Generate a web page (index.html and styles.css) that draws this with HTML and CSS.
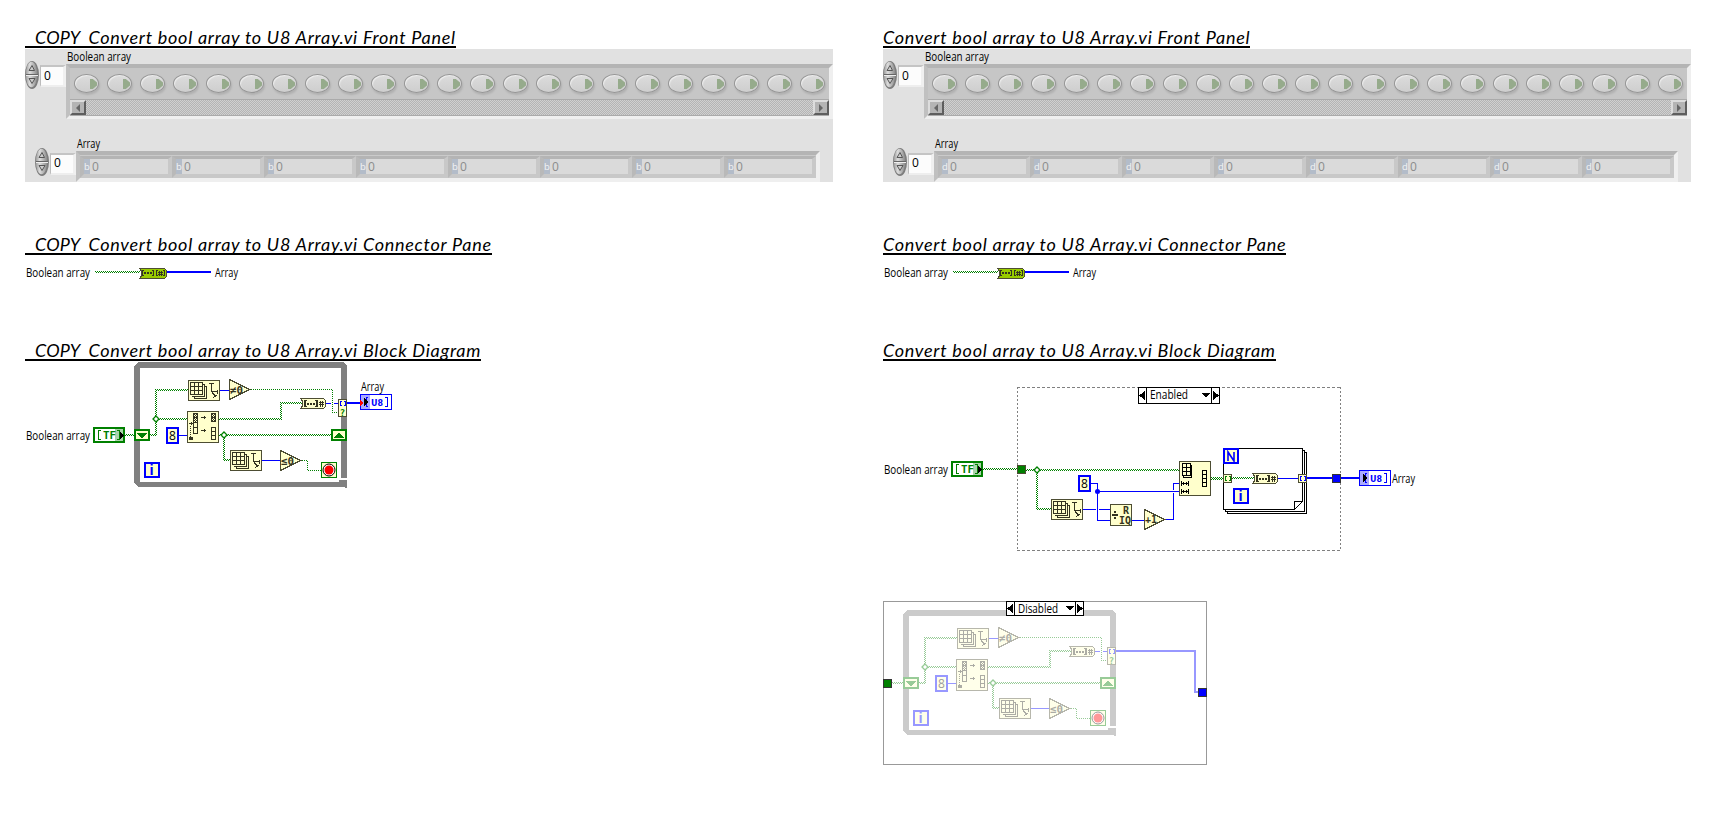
FILE: index.html
```html
<!DOCTYPE html>
<html lang="en">
<head>
<meta charset="utf-8">
<title>Convert bool array to U8 Array.vi</title>
<link rel="stylesheet" href="styles.css">
</head>
<body>
<svg class="defs" width="0" height="0" aria-hidden="true">
  <defs>
    <pattern id="wire" width="2" height="2" patternUnits="userSpaceOnUse"><path fill="#008000" d="M0 0h1v1H0zM1 1h1v1H1z"/></pattern>
    <pattern id="hatch" width="2" height="2" patternUnits="userSpaceOnUse"><path fill="#333320" d="M0 0h1v1H0zM1 1h1v1H1z"/></pattern>
    <linearGradient id="metal"><stop offset="0" stop-color="#999"/><stop offset=".35" stop-color="#ddd"/><stop offset="1" stop-color="#8a8a8a"/></linearGradient>
    <g id="spinner">
      <ellipse cx="7" cy="14" rx="7" ry="14" fill="#7d7d7d"/>
      <ellipse cx="6.500" cy="13.500" rx="5.800" ry="12.800" fill="url(#metal)"/>
      <path d="M1 13.500h12" stroke="#666"/><path d="M1 14.500h12" stroke="#eee"/>
      <path d="M4 9.500L7 4.500L9.500 9.500zM4 17.500h6L7 22.500z" fill="#ccc" stroke="#555"/>
    </g>
    <g id="size">
      <path class="node" d="M.5.5h31v20H.5z"/>
      <path class="ink" d="M6.500 15.500v3h12v-12h-2M4.500 15.500v1h12v-12h-2M2.500 2.500h12v12h-12zM6.500 2.500v12M10.500 2.500v12M2.500 6.500h12M2.500 10.500h12M20.500 3.500h5M23.500 3.500v8h6M29.500 9.500v4M23.500 11.500l4 5M25.500 17.500l4-3"/>
    </g>
    <g id="bool2num">
      <path class="node" d="M.5.5h23l2 2v6l-2 2H.5l1.500-2v-6z"/>
      <path fill="#333320" d="M4 2h3v1H6v5h1v1H4zM15 2h3v7h-3V8h1V3h-1zM7 5h2v2H7zM10 5h2v2h-2zM13 5h2v2h-2z"/>
      <path class="ink" d="M20.500 3v6M22.500 3v6M19 4.500h5M19 6.500h5"/>
    </g>
    <g id="tri"><path class="node" d="M.5.5L20.500 10.500L.5 20.500z"/></g>
    <g id="eight"><path class="const" d="M1 1h11v15H1z" fill="#fff"/><text class="ui" x="3" y="12.500">8</text></g>
    <g id="iter"><path class="const" d="M1 1h14v14H1z"/><text class="iter" x="5.600" y="13">i</text></g>
    <g id="tf">
      <path d="M1 1h30v14H1z" fill="#fff" stroke="#008000" stroke-width="2"/>
      <path d="M22 2h8v12h-8z" fill="#a9d3a9"/>
      <path d="M8 3.500H5.500v9H8M24 3.500h2.500v9H24" fill="none" stroke="#008000"/>
      <text class="px" x="10" y="11.500" fill="#008000" font-size="10" textLength="13" lengthAdjust="spacingAndGlyphs">TF</text>
      <path d="M27 5l4 3.500l-4 3.500z"/>
    </g>
    <g id="u8">
      <path d="M.5.5h31v15H.5z" fill="#fff" stroke="#00f"/>
      <path d="M1 1h9v14H1z" fill="#aaf"/>
      <path d="M8 3.500H6.500v9H8M25 3.500h2.500v9H25" fill="none" stroke="#00f"/>
      <text class="bold" x="11" y="11.500" fill="#00f" font-size="9.500" textLength="12" lengthAdjust="spacingAndGlyphs">U8</text>
      <path d="M4 4l4 4l-4 4z"/>
    </g>
    <g id="join"><path d="M3 0L6 3L3 6L0 3z" fill="#fff" stroke="#008000" stroke-width="1.300" shape-rendering="geometricPrecision"/></g>
    <g id="while">
      <path fill="#808080" fill-rule="evenodd" d="M138 362h205l4 4v112h-6V368H140v114h199v-2h8v8h-2l-1-1H138l-4-4V366z"/>
      <path fill="url(#wire)" d="M150 434h7v2h-7zM155 389h2v47h-2zM155 389h33v2h-33zM155 418h32v2h-32zM219 418h63v2h-63zM280 402h2v18h-2zM280 402h22v2h-22zM219 434h112v2H219zM223 434h2v27h-2zM223 459h7v2h-7z"/>
      <path class="thin" d="M251 389.500H332.500V412.500H338M302 460.500h5.500V470.500H321"/>
      <path class="blue" d="M220 390.500h9M326 403.500h5M334 403.500h4M179 435.500h8M262 460.500h18"/>
      <use href="#join" x="153" y="416"/><use href="#join" x="221" y="432"/>
      <path class="reg" d="M135 430h14v10h-14zM332 430h14v10h-14z"/>
      <path fill="#008000" d="M136.500 433h11l-5.500 5zM333.500 438h11l-5.500-5z"/>
      <use href="#size" x="188" y="380"/><use href="#size" x="230" y="450"/>
      <use href="#tri" x="229" y="379"/><text class="op" x="230" y="393.500" textLength="13" lengthAdjust="spacingAndGlyphs">≠0</text>
      <use href="#tri" x="280" y="450"/><text class="op" x="281" y="464.500" textLength="13" lengthAdjust="spacingAndGlyphs">≤0</text>
      <g transform="translate(187 411)">
        <path class="node" d="M.5.5h31v31H.5z"/>
        <path fill="url(#hatch)" d="M6 2h5v9H6zM24 2h5v9h-5z"/>
        <path class="ink" d="M6.500 2.500h4v20h-4zM6.500 6.500h4M6.500 11.500h4M6.500 16.500h4M24.500 2.500h4v8h-4zM24.500 6.500h4M24.500 16.500h4v12h-4zM24.500 20.500h4M24.500 24.500h4M14 6.500h5M14 19.500h5M17.500 5v3M17.500 18v3M2 12.500h4M4.500 11v3"/>
        <path class="ink" stroke-dasharray="1 1" d="M3.500 15v11"/>
        <path fill="#333320" d="M2 26h4v3H2z"/>
      </g>
      <use href="#bool2num" x="300" y="398"/>
      <path class="node" d="M338.500 399.500h8v17h-8z"/>
      <path class="blue" d="M342 401.500h-1.500v4h1.500M343.500 401.500h1.500v4h-1.500"/>
      <text class="px" x="339.800" y="415.500" fill="#008000" font-size="9">?</text>
      <use href="#eight" x="166" y="427"/>
      <use href="#iter" x="144" y="462"/>
      <path d="M321.500 462.500h15v15h-15z" fill="#ffc" stroke="#008000"/>
      <g shape-rendering="geometricPrecision"><circle cx="329" cy="470" r="6" fill="#fff" stroke="#000"/><circle cx="329" cy="470" r="4.500" fill="#f00"/></g>
    </g>
    <g id="connector">
      <text class="ui" x="26" y="277" textLength="64" lengthAdjust="spacingAndGlyphs">Boolean array</text>
      <path fill="url(#wire)" d="M95 271h45v2H95z"/><path fill="#00f" d="M167 271h44v2h-44z"/>
      <path d="M139.500 268.500h25l2 2v6l-2 2h-25l1.500-2v-6z" fill="#9c0" stroke="#4d4d33"/>
      <path class="ink" d="M144 270.500h-1.500v5h1.500M152 270.500h1.500v5h-1.500M158 270.500h-1.500v5h1.500M163 270.500h1.500v5h-1.500M159.500 271v5M161.500 271v5M158 272.500h5M158 274.500h5"/>
      <path fill="#333320" d="M144 272h2v2h-2zM147 272h2v2h-2zM150 272h2v2h-2z"/>
      <text class="ui" x="215" y="277" textLength="23" lengthAdjust="spacingAndGlyphs">Array</text>
    </g>
  </defs>
</svg>

<main class="compare">
  <article class="vi copy">
    <h2 class="title"><span>COPY  </span>Convert bool array to U8 Array.vi Front Panel</h2>
    <div class="panel">
      <svg class="label bool-label" width="70" height="15"><text class="ui" x="0" y="12" textLength="64" lengthAdjust="spacingAndGlyphs">Boolean array</text></svg>
      <div class="row bool-row">
        <svg class="spin" width="14" height="28"><use href="#spinner"/></svg>
        <span class="index">0</span>
        <div class="shell">
          <div class="leds"><i></i><i></i><i></i><i></i><i></i><i></i><i></i><i></i><i></i><i></i><i></i><i></i><i></i><i></i><i></i><i></i><i></i><i></i><i></i><i></i><i></i><i></i><i></i></div>
          <div class="scroll"><b><svg width="12" height="12"><path d="M8 2v8L4 6z" fill="#666"/></svg></b><b><svg width="12" height="12"><path d="M4 2v8l4-4z" fill="#666"/></svg></b></div>
        </div>
      </div>
      <svg class="label num-label" width="30" height="13"><text class="ui" x="0" y="10" textLength="23" lengthAdjust="spacingAndGlyphs">Array</text></svg>
      <div class="row num-row">
        <svg class="spin" width="14" height="28"><use href="#spinner"/></svg>
        <span class="index">0</span>
        <div class="shell cells">
          <span><em>b</em>0</span><span><em>b</em>0</span><span><em>b</em>0</span><span><em>b</em>0</span><span><em>b</em>0</span><span><em>b</em>0</span><span><em>b</em>0</span><span><em>b</em>0</span>
        </div>
      </div>
    </div>
    <h2 class="title second"><span>COPY  </span>Convert bool array to U8 Array.vi Connector Pane</h2>
    <svg class="pane" width="808" height="35" viewBox="25 255 808 35"><use href="#connector"/></svg>
    <h2 class="title third"><span>COPY  </span>Convert bool array to U8 Array.vi Block Diagram</h2>
    <svg class="diagram" width="808" height="454" viewBox="25 361 808 454">
      <text class="ui" x="26" y="440" textLength="64" lengthAdjust="spacingAndGlyphs">Boolean array</text>
      <path fill="url(#wire)" d="M125 434h9v2h-9z"/>
      <use href="#tf" x="93" y="427"/>
      <use href="#while"/>
      <path fill="#00f" d="M347 402h13v2h-13z"/>
      <use href="#u8" x="360" y="394"/><path fill="#f00" d="M360 400l3 3l-3 3z"/>
      <text class="ui" x="361" y="391" textLength="23" lengthAdjust="spacingAndGlyphs">Array</text>
    </svg>
  </article>

  <article class="vi">
    <h2 class="title">Convert bool array to U8 Array.vi Front Panel</h2>
    <div class="panel">
      <svg class="label bool-label" width="70" height="15"><text class="ui" x="0" y="12" textLength="64" lengthAdjust="spacingAndGlyphs">Boolean array</text></svg>
      <div class="row bool-row">
        <svg class="spin" width="14" height="28"><use href="#spinner"/></svg>
        <span class="index">0</span>
        <div class="shell">
          <div class="leds"><i></i><i></i><i></i><i></i><i></i><i></i><i></i><i></i><i></i><i></i><i></i><i></i><i></i><i></i><i></i><i></i><i></i><i></i><i></i><i></i><i></i><i></i><i></i></div>
          <div class="scroll"><b><svg width="12" height="12"><path d="M8 2v8L4 6z" fill="#666"/></svg></b><b><svg width="12" height="12"><path d="M4 2v8l4-4z" fill="#666"/></svg></b></div>
        </div>
      </div>
      <svg class="label num-label" width="30" height="13"><text class="ui" x="0" y="10" textLength="23" lengthAdjust="spacingAndGlyphs">Array</text></svg>
      <div class="row num-row">
        <svg class="spin" width="14" height="28"><use href="#spinner"/></svg>
        <span class="index">0</span>
        <div class="shell cells">
          <span><em>d</em>0</span><span><em>d</em>0</span><span><em>d</em>0</span><span><em>d</em>0</span><span><em>d</em>0</span><span><em>d</em>0</span><span><em>d</em>0</span><span><em>d</em>0</span>
        </div>
      </div>
    </div>
    <h2 class="title second">Convert bool array to U8 Array.vi Connector Pane</h2>
    <svg class="pane" width="808" height="35" viewBox="25 255 808 35"><use href="#connector"/></svg>
    <h2 class="title third">Convert bool array to U8 Array.vi Block Diagram</h2>
    <svg class="diagram" width="808" height="454" viewBox="883 361 808 454">
      <!-- Enabled frame -->
      <path d="M1017 387.500h324M1017 550.500h324" stroke="#808080" stroke-dasharray="3 2"/>
      <path d="M1017.500 387v164M1340.500 387v164" stroke="#808080" stroke-dasharray="2 2"/>
      <g>
        <path d="M1138.500 387.500h81v16h-81zM1146.500 387.500v16M1211.500 387.500v16" fill="#fff" stroke="#000"/>
        <path d="M1145 391v9l-6-4.500zM1213 391v9l6-4.500zM1202 393h8l-4 4.500z"/>
        <text class="ui" x="1150" y="399" textLength="38" lengthAdjust="spacingAndGlyphs">Enabled</text>
      </g>
      <text class="ui" x="884" y="474" textLength="64" lengthAdjust="spacingAndGlyphs">Boolean array</text>
      <path fill="url(#wire)" d="M983 468h34v2h-34zM1026 469h153v2h-153zM1036 469h2v41h-2zM1036 508h15v2h-15zM1211 477h12v3h-12z"/>
      <use href="#tf" x="951" y="461"/>
      <path d="M1017.500 465.500h8v8h-8z" fill="#008000" stroke="#4d4d33"/>
      <use href="#join" x="1034" y="467"/>
      <path class="blue" d="M1083 509.500h13M1099 509.500h11M1091 483.500h6.500v37h12.500M1097 491.500h82M1132 520.500h12M1165 519.500h8.500V493M1173.500 490v-6.500h5.500"/>
      <circle cx="1097.500" cy="491.500" r="2.500" fill="#00f" shape-rendering="geometricPrecision"/>
      <use href="#eight" x="1078" y="475"/>
      <use href="#size" x="1051" y="499"/>
      <path class="node" d="M1110.500 504.500h21v21h-21z"/>
      <text class="op small" x="1123" y="514">R</text><text class="op small" x="1119" y="524" textLength="12" lengthAdjust="spacingAndGlyphs">IQ</text>
      <path fill="#333320" d="M1112 514h6v2h-6zM1114 511h2v2h-2zM1114 517h2v2h-2z"/>
      <use href="#tri" x="1144" y="509"/><text class="op" x="1145" y="523" textLength="12" lengthAdjust="spacingAndGlyphs">+1</text>
      <g transform="translate(1179 461)">
        <path class="node" d="M.5.5h31v34H.5z"/>
        <path d="M4.500 15v1h8v-12h-1M12.500 14.500v-10M3.500 2.500h8v12h-8zM7.500 2.500v12M3.500 6.500h8M3.500 10.500h8M23.500 9.500h4v16h-4zM23.500 13.500h4M23.500 17.500h4M23.500 21.500h4M2.500 20v5M9.500 20v5M2.500 22.500h7M4.500 21v3M7.500 21v3M2.500 28v5M9.500 28v5M2.500 30.500h7M4.500 29v3M7.500 29v3" fill="none" stroke="#000"/>
      </g>
      <!-- For loop -->
      <path d="M1227.500 452.500h79v61h-79z" fill="#fff" stroke="#000"/>
      <path d="M1225.500 450.500h79v61h-79z" fill="#fff" stroke="#000"/>
      <path d="M1223.500 448.500h79v53l-8 8h-71z" fill="#fff" stroke="#000"/>
      <path d="M1294.500 509.500v-8h8" fill="none" stroke="#000"/>
      <path fill="url(#wire)" d="M1232 477h22v2h-22z"/>
      <path class="blue" d="M1278 478.500h20"/>
      <path fill="#00f" d="M1307 477h52v2h-52z"/>
      <path class="node" d="M1223.500 474.500h8v8h-8zM1298.500 474.500h8v8h-8z"/>
      <path d="M1227 476.500h-1.500v4h1.500M1228.500 476.500h1.500v4h-1.500" fill="none" stroke="#008000"/>
      <path class="blue" d="M1302 476.500h-1.500v4h1.500M1303.500 476.500h1.500v4h-1.500"/>
      <use href="#bool2num" x="1252" y="473"/>
      <g><path class="const" d="M1224 449h14v14h-14z"/><path d="M1228 461v-9l6 9v-9" fill="none" stroke="#00f" stroke-width="1.600" shape-rendering="geometricPrecision"/></g>
      <use href="#iter" x="1233" y="488"/>
      <path d="M1332.500 474.500h8v8h-8z" fill="#00f" stroke="#333"/>
      <use href="#u8" x="1359" y="470"/>
      <text class="ui" x="1392" y="483" textLength="23" lengthAdjust="spacingAndGlyphs">Array</text>

      <!-- Disabled frame -->
      <path d="M883.500 601.500h323v163h-323z" fill="#fff" stroke="#999"/>
      <g opacity=".4">
        <use href="#while" transform="translate(769 248)"/>
        <path fill="url(#wire)" d="M892 682h11v2h-11z"/>
        <path d="M1116 651h79v41h4" fill="none" stroke="#00f" stroke-width="2"/>
      </g>
      <path d="M883.500 679.500h8v8h-8z" fill="#008000" stroke="#333"/>
      <path d="M1198.500 688.500h8v8h-8z" fill="#00f" stroke="#333"/>
      <path d="M1006.500 601.500h77v14h-77zM1014.500 601.500v14M1075.500 601.500v14" fill="#fff" stroke="#000"/>
      <path d="M1013 604v9l-6-4.500zM1077 604v9l6-4.500zM1066 606h8l-4 4.500z"/>
      <text class="ui" x="1018" y="613" textLength="40" lengthAdjust="spacingAndGlyphs">Disabled</text>
    </svg>
  </article>
</main>
</body>
</html>
```
FILE: styles.css
```css
body { margin: 0; background: #fff; color: #000; font-family: "Open Sans", sans-serif; }
.defs { display: block; }
.compare { display: grid; grid-template-columns: 808px 808px; column-gap: 50px; padding: 24px 0 0 25px; }
.vi { display: flex; flex-direction: column; align-items: flex-start; height: 791px; overflow: hidden; }

.title {
  box-sizing: border-box; height: 24px; margin: 0; overflow: hidden;
  border-bottom: 2px solid #000; white-space: pre;
  font: italic 400 18px/26px Lato, sans-serif; letter-spacing: 0.74px;
}
.title span { letter-spacing: 0.15px; }
.copy .title { padding-left: 10px; }
.second { margin-top: 49px; }
.third { margin-top: 47px; }

.panel { box-sizing: border-box; width: 808px; height: 133px; margin-top: 1px; background: #e1e1e1; overflow: hidden; }
.label { display: block; overflow: visible; }
.bool-label { margin-left: 42px; }
.num-label { margin: 19px 0 0 52px; }
.row { display: flex; align-items: flex-start; }
.num-row { padding-left: 10px; }
.spin { flex: none; margin-top: -3px; }
.index {
  box-sizing: border-box; width: 26px; height: 22px; margin: 1px 0 0 1px; padding-left: 3px;
  border: solid; border-width: 2px 3px 2px 1px; border-color: #c4c4c4 #f0f0f0 #eee #bbb;
  background: #fcfcfc; font-size: 12px; line-height: 17px;
}
.shell {
  box-sizing: border-box; width: 767px; height: 55px;
  border: 4px solid; border-color: #b4b4b4 #efefef #efefef #c0c0c0; background: #c6c6c6;
}
.leds { display: flex; gap: 9px; height: 31px; padding: 6px 0 0 4px; box-sizing: border-box; }
.leds i {
  position: relative; box-sizing: border-box; flex: none; width: 25px; height: 19px; margin-right: -1px;
  border: 1px solid #969696; border-radius: 50%;
  background: linear-gradient(#dcdcdc, #cecece); box-shadow: 1px 2px 2px #b0b0b0, inset 1px 1px 1px #eee;
}
.leds i::after {
  content: ""; position: absolute; left: 15px; top: 4px; width: 7px; height: 10px;
  background: #96ab8c; clip-path: polygon(0 0, 40% 0, 100% 35%, 100% 65%, 40% 100%, 0 100%);
}
.scroll {
  box-sizing: border-box; display: flex; justify-content: space-between; height: 17px; border: solid #aaa; border-width: 1px 0;
  background: repeating-conic-gradient(#b4b4b4 0 25%, #d0d0d0 0 50%) 0 0 / 2px 2px;
}
.scroll b { box-sizing: border-box; width: 16px; height: 15px; border: 2px solid; border-color: #ddd #5e5e5e #5e5e5e #ddd; background: #b4b4b4; line-height: 0; }

.num-row .index { margin-top: 2px; line-height: 16px; }
.cells { display: flex; width: 744px; height: 31px; background: #cacaca; }
.cells span {
  box-sizing: border-box; flex: none; display: flex; width: 92px; height: 22px; margin-top: 1px;
  border: 3px solid; border-width: 3px 4px 4px; border-color: #b4b4b4 #c8c8c8 #c8c8c8 #b9b9b9;
  background: #dadada; color: #8c8c8c; font-size: 12px; line-height: 15px;
}
.cells em { flex: none; width: 6px; height: 15px; margin-right: 2px; background: #b3bcc9; color: #f4f4f4; font-style: normal; font-size: 9.5px; line-height: 15px; }

.pane, .diagram { display: block; flex: none; }
svg text.ui { font: 12px "Open Sans", sans-serif; }
svg text.px { font-family: "DejaVu Sans Mono", monospace; font-weight: bold; }
svg text.bold { font-family: "DejaVu Sans", sans-serif; font-weight: bold; }
svg text.iter { font: bold 15px "Liberation Sans", sans-serif; fill: #00f; }
svg text.op { font: bold 11px "DejaVu Sans Mono", monospace; fill: #333320; }
svg text.op.small { font-size: 10px; }
.node { fill: #ffc; stroke: #4d4d33; }
.ink { fill: none; stroke: #333320; }
.const { fill: #ffc; stroke: #00f; stroke-width: 2; }
.reg { fill: #ffc; stroke: #008000; stroke-width: 2; }
.blue { fill: none; stroke: #00f; }
.thin { fill: none; stroke: #008000; stroke-dasharray: 1 1; }
.diagram, .pane { shape-rendering: crispEdges; }
```
